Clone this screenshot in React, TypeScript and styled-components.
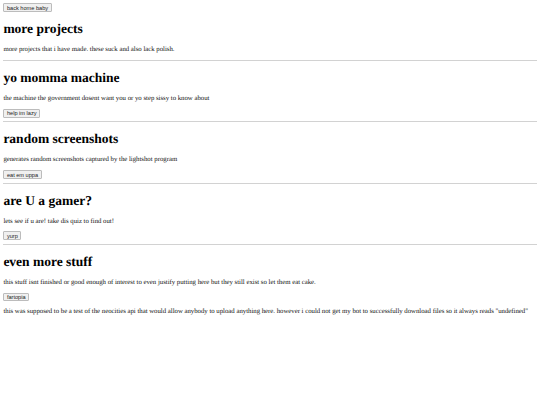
import React from "react";
import styled, { createGlobalStyle } from "styled-components";

const S = 0.421875;
const px = (n: number) => `${(n * S).toFixed(3)}px`;

const Global = createGlobalStyle`
  html, body { background: #fff; }
  body {
    margin: ${px(8)};
    font-family: "Liberation Serif", "Times New Roman", serif;
    font-size: ${px(16)};
    color: #000;
    text-rendering: geometricPrecision;
  }
`;

const Page = styled.main`
  display: block;
`;

const Line = styled.div`
  font-size: ${px(16)};
  line-height: normal;
`;

const Button = styled.button`
  font-family: "Liberation Sans", Arial, sans-serif;
  font-size: ${px(13.333)};
  line-height: normal;
  color: #222;
  background: #f0f0f0;
  border: 1px solid #bcbcbc;
  border-radius: 1px;
  padding: ${px(1)} ${px(6)};
  margin: 0;
  height: ${px(21.3)};
  box-sizing: border-box;
  display: inline-flex;
  align-items: center;
  vertical-align: middle;
  cursor: pointer;
`;

const Title = styled.h1`
  font-size: ${px(32)};
  font-weight: bold;
  margin: ${px(21.44)} 0;
  line-height: normal;
`;

const Text = styled.p`
  font-size: ${px(16)};
  margin: ${px(16)} 0;
  line-height: normal;
  color: #111;
`;

const Rule = styled.hr`
  border: none;
  border-top: 1px solid #d2d2d2;
  height: 0;
  margin: ${px(8)} 0;
`;

type Section = {
  title: string;
  desc: string;
  button?: string;
  extra?: string;
};

const sections: Section[] = [
  {
    title: "yo momma machine",
    desc: "the machine the government dosent want you or yo step sissy to know about",
    button: "help im lazy",
  },
  {
    title: "random screenshots",
    desc: "generates random screenshots captured by the lightshot program",
    button: "eat em uppa",
  },
  {
    title: "are U a gamer?",
    desc: "lets see if u are! take dis quiz to find out!",
    button: "yurp",
  },
  {
    title: "even more stuff",
    desc: "this stuff isnt finished or good enough of interest to even justify putting here but they still exist so let them eat cake.",
    button: "fartopia",
    extra:
      'this was supposed to be a test of the neocities api that would allow anybody to upload anything here. however i could not get my bot to successfully download files so it always reads "undefined"',
  },
];

export default function App() {
  return (
    <Page>
      <Global />
      <Line>
        <Button>back home baby</Button>
      </Line>
      <Title>more projects</Title>
      <Text>more projects that i have made. these suck and also lack polish.</Text>
      {sections.map((s) => (
        <React.Fragment key={s.title}>
          <Rule />
          <Title>{s.title}</Title>
          <Text>{s.desc}</Text>
          {s.button && (
            <Line>
              <Button>{s.button}</Button>
            </Line>
          )}
          {s.extra && <Text>{s.extra}</Text>}
        </React.Fragment>
      ))}
    </Page>
  );
}
